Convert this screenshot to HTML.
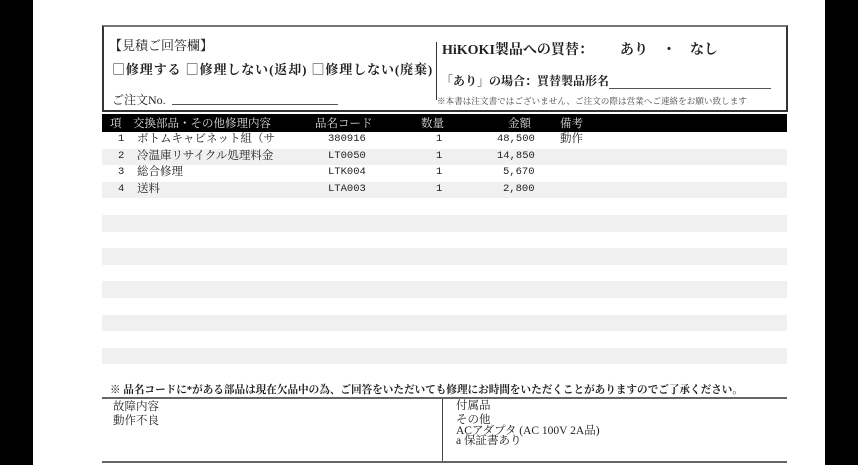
<!DOCTYPE html>
<html><head><meta charset="utf-8"><style>
*{margin:0;padding:0;box-sizing:border-box}
body{width:858px;height:465px;background:#fff;position:relative;overflow:hidden;font-family:"Liberation Serif","Noto Serif CJK SC",serif;color:#222}
.a{position:absolute;white-space:nowrap}
.b{font-weight:bold}
.m{font-family:"Liberation Mono",monospace;font-size:10.5px}
.row{position:absolute;left:102px;width:685px;height:16.6px}
.g{background:#f0f0f0}
</style></head><body>
<div class="a" style="left:0;top:0;width:33px;height:465px;background:#000"></div>
<div class="a" style="left:825px;top:0;width:33px;height:465px;background:#000"></div>

<div class="a" style="left:102px;top:25px;width:686px;height:87px;border:2px solid #333;border-top-color:#777"></div>
<div class="a" style="left:109px;top:35px;font-size:13px">【見積ご回答欄】</div>
<div class="a b" style="left:112px;top:59px;font-size:13px;letter-spacing:0.9px"><span style="font-weight:normal;font-family:'Noto Sans CJK JP',sans-serif">□</span>修理する <span style="font-weight:normal;font-family:'Noto Sans CJK JP',sans-serif">□</span>修理しない(返却) <span style="font-weight:normal;font-family:'Noto Sans CJK JP',sans-serif">□</span>修理しない(廃棄)</div>
<div class="a" style="left:112px;top:91px;font-size:12px">ご注文No.</div>
<div class="a" style="left:172px;top:104px;width:166px;height:1px;background:#555"></div>
<div class="a" style="left:436px;top:42px;width:1px;height:58px;background:#333"></div>
<div class="a b" style="left:442px;top:39px;font-size:14px">HiKOKI製品への買替：</div>
<div class="a b" style="left:620px;top:39px;font-size:14px">あり　・　なし</div>
<div class="a b" style="left:441px;top:72px;font-size:12px">「あり」の場合：買替製品形名</div>
<div class="a" style="left:609px;top:88px;width:162px;height:1px;background:#555"></div>
<div class="a" style="left:437px;top:95px;font-size:8.6px;color:#444">※本書は注文書ではございません、ご注文の際は営業へご連絡をお願い致します</div>

<div class="a" style="left:102px;top:114px;width:685px;height:18px;background:#000"></div>
<div class="a" style="left:110px;top:115px;font-size:11.5px;color:#ddd">項　交換部品・その他修理内容</div>
<div class="a" style="left:315px;top:115px;font-size:11.5px;color:#ddd">品名コード</div>
<div class="a" style="left:421px;top:115px;font-size:11.5px;color:#ddd">数量</div>
<div class="a" style="left:508px;top:115px;font-size:11.5px;color:#ddd">金額</div>
<div class="a" style="left:560px;top:115px;font-size:11.5px;color:#ddd">備考</div>

<div class="row g" style="top:148.6px"></div>
<div class="row g" style="top:181.8px"></div>
<div class="row g" style="top:215px"></div>
<div class="row g" style="top:248.2px"></div>
<div class="row g" style="top:281.4px"></div>
<div class="row g" style="top:314.6px"></div>
<div class="row g" style="top:347.8px"></div>

<div class="a" style="left:0;top:131px;width:858px;font-size:11.5px;line-height:16.6px">
<div style="position:relative;height:16.6px"><span class="a m" style="left:118px">1</span><span class="a" style="left:137px">ボトムキャビネット組（サ</span><span class="a m" style="left:328px">380916</span><span class="a m" style="left:436px">1</span><span class="a m" style="left:497px">48,500</span><span class="a" style="left:560px">動作</span></div>
<div style="position:relative;height:16.6px"><span class="a m" style="left:118px">2</span><span class="a" style="left:137px">冷温庫リサイクル処理料金</span><span class="a m" style="left:328px">LT0050</span><span class="a m" style="left:436px">1</span><span class="a m" style="left:497px">14,850</span></div>
<div style="position:relative;height:16.6px"><span class="a m" style="left:118px">3</span><span class="a" style="left:137px">総合修理</span><span class="a m" style="left:328px">LTK004</span><span class="a m" style="left:436px">1</span><span class="a m" style="left:503px">5,670</span></div>
<div style="position:relative;height:16.6px"><span class="a m" style="left:118px">4</span><span class="a" style="left:137px">送料</span><span class="a m" style="left:328px">LTA003</span><span class="a m" style="left:436px">1</span><span class="a m" style="left:503px">2,800</span></div>
</div>

<div class="a b" style="left:110px;top:382px;font-size:10.6px">※ 品名コードに*がある部品は現在欠品中の為、ご回答をいただいても修理にお時間をいただくことがありますのでご了承ください。</div>
<div class="a" style="left:102px;top:397px;width:685px;height:2px;background:#666"></div>
<div class="a" style="left:442px;top:399px;width:1px;height:63px;background:#444"></div>
<div class="a" style="left:102px;top:461px;width:685px;height:2px;background:#666"></div>
<div class="a" style="left:113px;top:400px;font-size:11.5px;line-height:14px">故障内容<br>動作不良</div>
<div class="a" style="left:456px;top:400px;font-size:11.5px;line-height:13px">付属品</div>
<div class="a" style="left:456px;top:415px;font-size:11.5px;line-height:10.5px">その他<br>ACアダプタ (AC 100V 2A品)<br>a 保証書あり</div>
</body></html>
